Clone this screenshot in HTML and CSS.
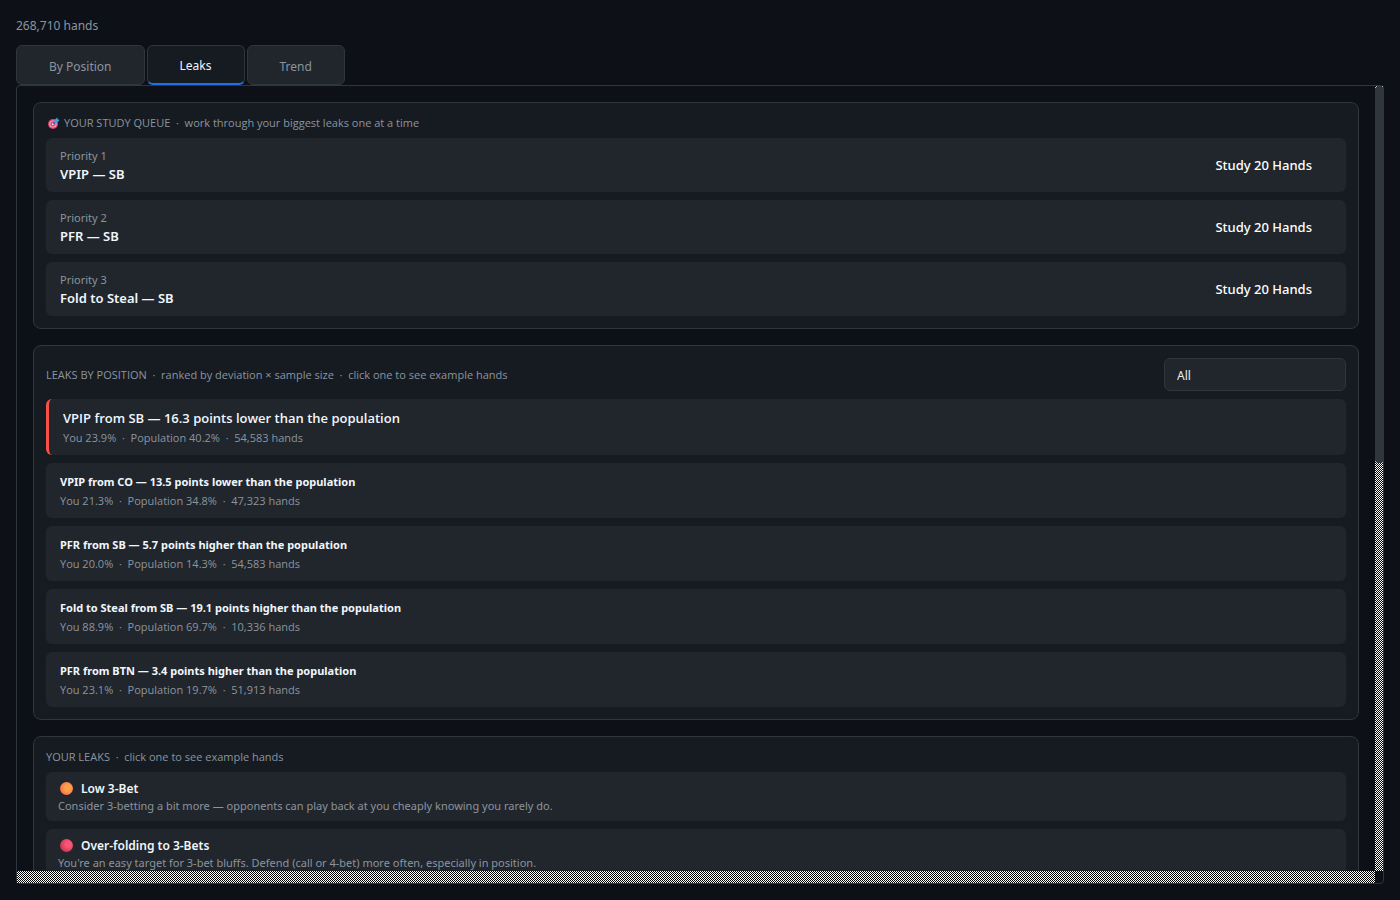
FILE: index.html
```
<!DOCTYPE html>
<html lang="en">

<head>
    <meta charset="UTF-8">
    <title>Leaks</title>
    <link rel="stylesheet" href="styles.css">
</head>

<body>
    <div class="summary">268,710 hands</div>
    <div class="tabs">
        <button type="button" class="tab">By Position</button>
        <button type="button" class="tab active">Leaks</button>
        <button type="button" class="tab">Trend</button>
    </div>
    <div class="pane">
        <div class="content">
            <section class="card">
                <h2 class="card-title">
                    <svg class="target" viewBox="0 0 14 14" aria-hidden="true">
                        <circle cx="6" cy="8" r="5" fill="#e0406c"/>
                        <circle cx="6" cy="8" r="3.6" fill="#e9c3d2"/>
                        <circle cx="6" cy="8" r="2.7" fill="#e0406c"/>
                        <circle cx="6" cy="8" r="1.2" fill="#f3dbe4"/>
                        <path d="M6 8L10 4" stroke="#1d6fb8" stroke-width="1.2"/>
                        <path d="M7.6 6.4V4L10 1.6l.8 1.6 1.8.8L10.4 6.4z" fill="#3d9fe4"/>
                    </svg>
                    YOUR STUDY QUEUE&nbsp; ·&nbsp; work through your biggest leaks one at a time
                </h2>
                <div class="item study">
                    <div class="item-text">
                        <span class="sub">Priority 1</span>
                        <span class="name">VPIP — SB</span>
                    </div>
                    <button type="button" class="study-btn">Study 20 Hands</button>
                </div>
                <div class="item study">
                    <div class="item-text">
                        <span class="sub">Priority 2</span>
                        <span class="name">PFR — SB</span>
                    </div>
                    <button type="button" class="study-btn">Study 20 Hands</button>
                </div>
                <div class="item study">
                    <div class="item-text">
                        <span class="sub">Priority 3</span>
                        <span class="name">Fold to Steal — SB</span>
                    </div>
                    <button type="button" class="study-btn">Study 20 Hands</button>
                </div>
            </section>

            <section class="card">
                <div class="card-head">
                    <h2 class="card-title"><label for="position">LEAKS BY POSITION&nbsp; ·&nbsp; ranked by deviation × sample size&nbsp; ·&nbsp; click one to see example hands</label></h2>
                    <select class="filter" id="position">
                        <option>All</option>
                    </select>
                </div>
                <button type="button" class="item leak top">
                    <span class="name">VPIP from SB — 16.3 points lower than the population</span>
                    <span class="sub">You 23.9%&nbsp; ·&nbsp; Population 40.2%&nbsp; ·&nbsp; 54,583 hands</span>
                </button>
                <button type="button" class="item leak">
                    <span class="name">VPIP from CO — 13.5 points lower than the population</span>
                    <span class="sub">You 21.3%&nbsp; ·&nbsp; Population 34.8%&nbsp; ·&nbsp; 47,323 hands</span>
                </button>
                <button type="button" class="item leak">
                    <span class="name">PFR from SB — 5.7 points higher than the population</span>
                    <span class="sub">You 20.0%&nbsp; ·&nbsp; Population 14.3%&nbsp; ·&nbsp; 54,583 hands</span>
                </button>
                <button type="button" class="item leak">
                    <span class="name">Fold to Steal from SB — 19.1 points higher than the population</span>
                    <span class="sub">You 88.9%&nbsp; ·&nbsp; Population 69.7%&nbsp; ·&nbsp; 10,336 hands</span>
                </button>
                <button type="button" class="item leak">
                    <span class="name">PFR from BTN — 3.4 points higher than the population</span>
                    <span class="sub">You 23.1%&nbsp; ·&nbsp; Population 19.7%&nbsp; ·&nbsp; 51,913 hands</span>
                </button>
            </section>

            <section class="card">
                <h2 class="card-title">YOUR LEAKS&nbsp; ·&nbsp; click one to see example hands</h2>
                <button type="button" class="item tip">
                    <span class="name"><i class="dot orange"></i>Low 3-Bet</span>
                    <span class="sub">Consider 3-betting a bit more — opponents can play back at you cheaply knowing you rarely do.</span>
                </button>
                <button type="button" class="item tip">
                    <span class="name"><i class="dot red"></i>Over-folding to 3-Bets</span>
                    <span class="sub">You're an easy target for 3-bet bluffs. Defend (call or 4-bet) more often, especially in position.</span>
                </button>
            </section>
        </div>
        <div class="vbar"><div class="thumb"></div></div>
        <div class="hbar"></div>
    </div>
</body>

</html>
```
FILE: styles.css
```
* {
    box-sizing: border-box;
    margin: 0;
    padding: 0;
}

body {
    display: flex;
    flex-direction: column;
    height: 100vh;
    padding: 16px;
    overflow: hidden;
    background: #0d1117;
    color: #8b949e;
    font: 12px/19px "Noto Sans", "Open Sans", sans-serif;
}

button,
select {
    font: inherit;
    color: inherit;
    border: 0;
    background: none;
}

.summary {
    margin-bottom: 10px;
}

/* tabs */
.tabs {
    display: flex;
    gap: 2px;
}

.tab {
    height: 40px;
    min-width: 98px;
    padding: 2px 32px 0;
    border: 1px solid #30363d;
    border-radius: 6px;
    background: #21262d;
}

.tab.active {
    padding-top: 1px;
    border-bottom: 2px solid #1f6feb;
    background: #161b22;
    color: #f0f6fc;
}

/* scroll pane */
.pane {
    display: grid;
    grid-template-columns: 1fr 8px;
    grid-template-rows: 1fr 12px;
    flex: 1;
    min-height: 0;
    border: 1px solid #30363d;
    border-radius: 4px;
}

.content {
    display: flex;
    flex-direction: column;
    gap: 16px;
    min-height: 0;
    padding: 16px;
    overflow: hidden;
}

.vbar,
.hbar {
    background: conic-gradient(#fff 25%, #000 0 50%, #fff 0 75%, #000 0) 0 0 / 2px 2px;
}

.thumb {
    height: 48%;
    margin-right: -1px;
    border-radius: 4px;
    background: #30363d;
}

/* cards */
.card {
    display: flex;
    flex-direction: column;
    flex-shrink: 0;
    gap: 8px;
    padding: 12px;
    border: 1px solid #30363d;
    border-radius: 8px;
    background: #161b22;
}

.card-head {
    display: flex;
    align-items: center;
    justify-content: space-between;
}

.card-title {
    display: flex;
    align-items: center;
    font-family: "Open Sans", "Noto Sans", sans-serif;
    font-size: 11px;
    font-weight: 400;
    line-height: 15px;
}

.target {
    width: 14px;
    height: 14px;
    margin: 0 3px 0 1px;
}

.filter {
    width: 182px;
    height: 33px;
    padding: 2px 12px 0;
    border: 1px solid #30363d;
    border-radius: 6px;
    background: #21262d;
    color: #e6edf3;
    appearance: none;
}

.item {
    display: flex;
    border-radius: 6px;
    background: #21262d;
    text-align: left;
}

.name {
    color: #f0f6fc;
    font-weight: 600;
    line-height: 17px;
}

.sub {
    font-size: 11px;
    line-height: 15px;
}

.study {
    align-items: center;
    justify-content: space-between;
    padding: 10px 14px;
}

.item-text {
    display: flex;
    flex-direction: column;
    gap: 3px;
}

.study .name {
    font-size: 13px;
    line-height: 16px;
}

.study-btn {
    padding: 0 20px;
    color: #fff;
    font-size: 13px;
    font-weight: 500;
}

.leak {
    flex-direction: column;
    gap: 3px;
    padding: 10px 14px;
    font-family: "Open Sans", "Noto Sans", sans-serif;
}

.leak .name {
    font-family: "Noto Sans", "Open Sans", sans-serif;
    font-size: 11px;
    font-weight: 700;
}

.leak.top {
    border-left: 3px solid #f85149;
}

.leak.top .name {
    font-family: "Open Sans", "Noto Sans", sans-serif;
    font-size: 13px;
    font-weight: 600;
    line-height: 18px;
}

.tip {
    flex-direction: column;
    gap: 1px;
    padding: 8px 12px;
}

.tip .name {
    display: flex;
    align-items: center;
    gap: 8px;
    padding-left: 2px;
}

.dot {
    width: 13px;
    height: 13px;
    border-radius: 50%;
}

.dot.orange {
    background: radial-gradient(circle at 60% 45%, #ffa24d 25%, #f9684a 80%);
}

.dot.red {
    background: radial-gradient(circle at 65% 40%, #fc5474 25%, #c62f4b 80%);
}
```
